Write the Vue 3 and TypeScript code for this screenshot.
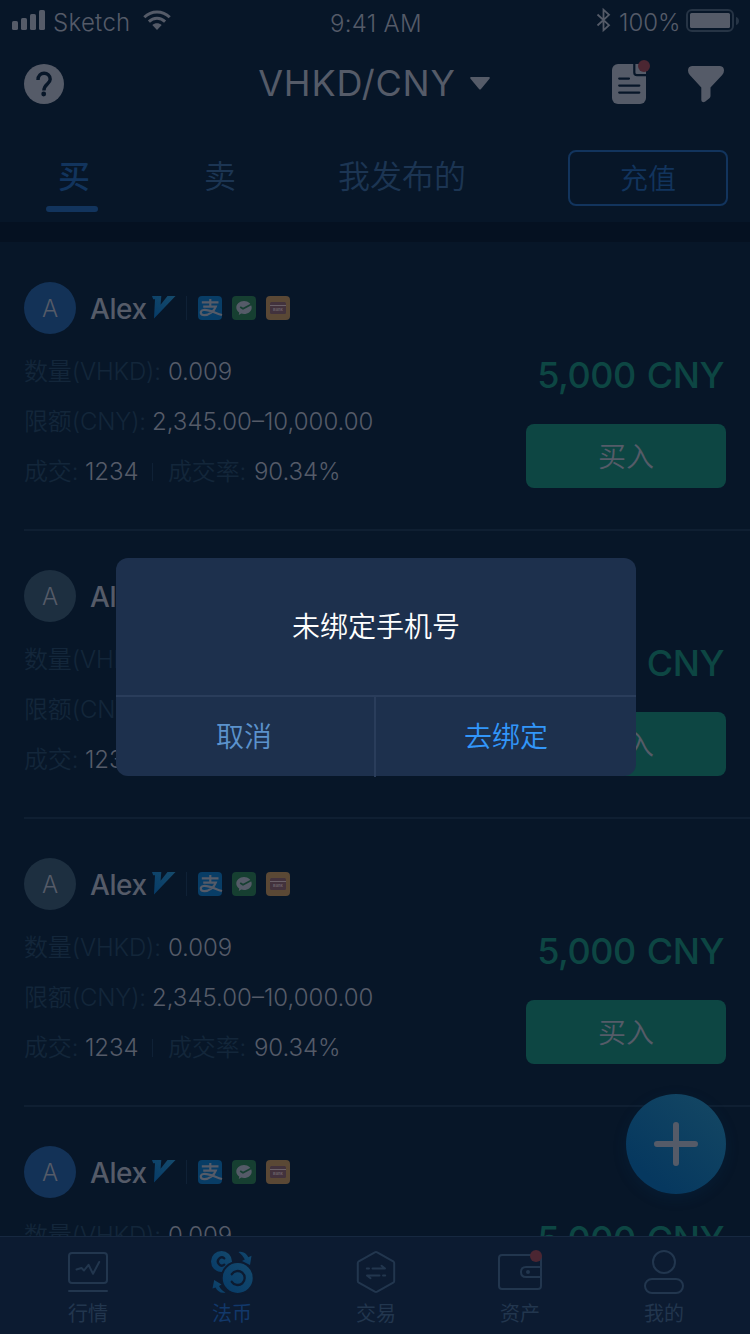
<script setup lang="ts">
import { ref } from 'vue'

interface Offer {
  id: number
  online: boolean
}

const offers: Offer[] = [
  { id: 1, online: true },
  { id: 2, online: false },
  { id: 3, online: false },
  { id: 4, online: true },
]

const tabs = ['买', '卖', '我发布的']
const activeTab = ref(0)
</script>

<template>
  <div class="screen">
    <header class="status">
      <div class="status-left">
        <svg class="signal" width="34" height="20" viewBox="0 0 34 20">
          <rect x="0" y="11" width="6" height="9" rx="1.6" />
          <rect x="9" y="8" width="6" height="12" rx="1.6" />
          <rect x="18" y="4" width="6" height="16" rx="1.6" />
          <rect x="27" y="0" width="6" height="20" rx="1.6" />
        </svg>
        <span class="carrier">Sketch</span>
        <svg class="wifi" width="28" height="20" viewBox="0 0 28 20">
          <path d="M1.3 7.2C8.5 .1 19.500 .1 26.700 7.200" />
          <path d="M5.900 11.600C10.500 7.100 17.500 7.100 22.100 11.600" />
          <path class="solid" d="M9.300 15.100C12 12.700 16 12.700 18.700 15.100L14 19.900Z" />
        </svg>
      </div>
      <span class="time">9:41 AM</span>
      <div class="status-right">
        <svg width="16" height="24" viewBox="0 0 16 24" class="bluetooth">
          <path d="M1.500 6.500L13 17.200L7.500 22.300V1.700L13 6.800L1.500 17.500" />
        </svg>
        <span class="percent">100%</span>
        <svg width="54" height="24" viewBox="0 0 54 24" class="battery">
          <rect class="shell" x="1" y="1" width="46" height="21" rx="5" />
          <rect x="4" y="4" width="40" height="15" rx="1.500" />
          <path class="nub" d="M50 8C54 9 54 15 50 16Z" />
        </svg>
      </div>
    </header>

    <nav class="nav">
      <svg class="help" width="40" height="40" viewBox="0 0 40 40">
        <circle cx="20" cy="20" r="20" />
        <path d="M14 16C13.800 6.800 26.300 7.300 26.200 15.300C26.200 20 19.900 20.300 19.900 26.500" />
        <circle class="point" cx="19.700" cy="30" r="2.400" />
      </svg>
      <h1 class="pair">
        <span class="pair-name">VHKD/CNY</span>
        <svg width="20" height="13" viewBox="0 0 20 13"><path d="M1 0H19Q20.500 .3 19.500 1.800L11 12Q10 13 9 12L.5 1.800Q-.5 .3 1 0Z" /></svg>
      </h1>
      <div class="nav-actions">
        <svg class="orders" width="40" height="46" viewBox="0 0 40 46">
          <rect x="0" y="4" width="34" height="40" rx="6" />
          <path class="cut" d="M22.300 3V12.500Q22.300 15.200 25 15.200H35M7.200 18.600H17M7.200 25.600H27.300M7.200 32.600H27.300" />
          <circle class="alert" cx="32" cy="6" r="6" />
        </svg>
        <svg width="36" height="37" viewBox="0 0 36 37">
          <path d="M4 0H32Q36 .3 36 4.500Q36 7 34.200 9L22.500 21.500V29.800Q22.500 31 21.700 32L17 35.800Q13.300 37 13.300 34V21.500L1.800 9Q0 7 0 4.500Q0 .3 4 0Z" />
        </svg>
      </div>
    </nav>

    <div class="tabs">
      <button
        v-for="(tab, i) in tabs"
        :key="tab"
        class="tab"
        :class="{ active: i === activeTab }"
        @click="activeTab = i"
      ><span>{{ tab }}</span></button>
      <button class="recharge">充值</button>
    </div>

    <main class="offers">
      <article v-for="offer in offers" :key="offer.id" class="offer">
        <div class="seller">
          <span class="avatar" :class="{ online: offer.online }">A</span>
          <span class="name">Alex</span>
          <svg class="vip" width="24" height="23" viewBox="0 0 24 23">
            <defs>
              <linearGradient :id="'vip' + offer.id" x1="0" y1="1" x2="1" y2="0">
                <stop offset="0" stop-color="#063b68" />
                <stop offset="1" stop-color="#154a6b" />
              </linearGradient>
            </defs>
            <path :fill="'url(#vip' + offer.id + ')'" d="M0 0H9.300L8.600 8.800L15.500 0H23.500L2 22.500L3 3.300H1.200Z" />
          </svg>
          <i class="bar"></i>
          <svg class="pay" width="24" height="24" viewBox="0 0 24 24">
            <rect width="24" height="24" rx="4" fill="#083d66" />
            <path class="alipay" d="M3.800 6.400H20.500M12.300 3V10.600M5.200 10.600H17.800C16 15.500 11 19.200 6.500 19.200C1.800 19.200 1.700 14.700 5.500 14C10.500 13.200 16.500 16.700 24 19" />
          </svg>
          <svg class="pay" width="24" height="24" viewBox="0 0 24 24">
            <rect width="24" height="24" rx="4" fill="#163f31" />
            <path fill="#555b68" d="M12 5C16.500 5 19.700 8 19.700 11.500C19.700 15.500 16.200 18 12 18Q10.500 18 9.300 17.600L6.800 19L7.200 16.600C5.300 15.300 4.300 13.500 4.300 11.500C4.300 8 7.500 5 12 5Z" />
            <path d="M8.200 11L11 12.800L19 8.600" fill="none" stroke="#163f31" stroke-width="1.700" />
          </svg>
          <svg class="pay" width="24" height="24" viewBox="0 0 24 24">
            <rect width="24" height="24" rx="4" fill="#5a4835" />
            <rect x="4" y="6" width="16" height="12" rx="1.500" fill="#42323d" />
            <path d="M4 9.500H20" stroke="#6a6068" stroke-width="1" />
            <text x="12" y="15" text-anchor="middle" font-size="4" font-weight="700" fill="#6a6068">Bank</text>
          </svg>
        </div>
        <div class="details">
          <dl class="facts">
            <div class="fact"><dt class="l-amount">数量(VHKD):</dt><dd>0.009</dd></div>
            <div class="fact"><dt class="l-limit">限额(CNY):</dt><dd class="v-limit">2,345.00–10,000.00</dd></div>
            <div class="fact">
              <dt class="l-deals">成交:</dt><dd class="v-deals">1234</dd>
              <i class="bar small"></i>
              <dt class="l-rate">成交率:</dt><dd>90.34%</dd>
            </div>
          </dl>
          <div class="deal">
            <strong class="price">5,000 CNY</strong>
            <button class="buy">买入</button>
          </div>
        </div>
      </article>
    </main>

    <button class="fab">
      <svg width="44" height="44" viewBox="0 0 44 44"><path d="M22 3V41M3 22H41" /></svg>
    </button>

    <footer class="tabbar">
      <a class="item">
        <svg width="44" height="44" viewBox="0 0 44 44">
          <rect x="3" y="3" width="38" height="30" rx="3" />
          <path d="M3 41H41" />
          <path d="M10.500 19.500L15.500 18L18 20.500L22.500 14.800L27 23.800L33.200 12" />
        </svg>
        <span>行情</span>
      </a>
      <a class="item current">
        <svg width="44" height="44" viewBox="0 0 44 44">
          <defs>
            <linearGradient id="coin" x1="0" y1="1" x2="1" y2="0">
              <stop offset="0" stop-color="#073b68" />
              <stop offset="1" stop-color="#14496c" />
            </linearGradient>
          </defs>
          <circle class="coin" cx="11.500" cy="11.500" r="10.500" />
          <path class="groove" d="M14.300 8.300A4 4 0 1 0 14.300 14.700" />
          <circle class="gap" cx="27.700" cy="28" r="17" />
          <circle class="coin" cx="27.700" cy="28" r="15" />
          <path class="groove" d="M21.800 24.200A7 7 0 1 1 21.800 31.800" />
          <path class="coin" d="M28.500 2C33 1 36.500 3.500 38.300 7.300L41.500 5.800L40 15L32 11L34.800 9.600C33.300 6.500 31.500 4.200 28.500 2Z" />
          <path class="coin" d="M15.500 42.500C11 43.500 7.500 41.500 5.500 37.500L2.500 38.500L4.200 30L11.500 34.500L9 36C10.300 39 12.500 41 15.500 42.500Z" />
        </svg>
        <span>法币</span>
      </a>
      <a class="item">
        <svg width="44" height="44" viewBox="0 0 44 44">
          <path d="M20.800 2.400Q22 1.800 23.200 2.400L39.200 11.300Q40.200 12 40.200 13V31Q40.200 32 39.200 32.700L23.200 41.600Q22 42.200 20.800 41.600L4.800 32.700Q3.800 32 3.800 31V13Q3.800 12 4.800 11.300Z" />
          <path d="M12.800 18.500H15M18.500 18.500H31L27.500 15.800M31.200 25.500H29M25.500 25.500H13L16.500 28.200" />
        </svg>
        <span>交易</span>
      </a>
      <a class="item">
        <svg width="44" height="44" viewBox="0 0 44 44">
          <rect x="1" y="5" width="42" height="34" rx="3" />
          <path d="M42.500 17H28Q23 17 23 22Q23 27 28 27H42.500" />
          <circle class="dot" cx="30" cy="22" r="2" />
          <circle class="alert" cx="38" cy="6" r="6" />
        </svg>
        <span>资产</span>
      </a>
      <a class="item">
        <svg width="44" height="44" viewBox="0 0 44 44">
          <circle cx="22" cy="12" r="11" />
          <rect x="3" y="29" width="38" height="14" rx="7" />
        </svg>
        <span>我的</span>
      </a>
    </footer>

    <section class="dialog" role="dialog">
      <p class="message">未绑定手机号</p>
      <div class="choices">
        <button class="cancel">取消</button>
        <button class="confirm">去绑定</button>
      </div>
    </section>
  </div>
</template>

<style>
body {
  margin: 0;
  background: #071628;
}
</style>

<style scoped>
.screen {
  position: relative;
  display: flex;
  flex-direction: column;
  width: 750px;
  height: 1334px;
  overflow: hidden;
  background: #071628;
  color: #555b68;
  font-family: Inter, "Noto Sans CJK SC", sans-serif;
  font-size: 24px;
  font-weight: 350;
}
svg {
  display: block;
  flex: none;
  fill: #555b68;
  overflow: visible;
}
button {
  padding: 0;
  border: 0;
  background: none;
  color: inherit;
  font: inherit;
}
.status {
  display: grid;
  grid-template-columns: 1fr auto 1fr;
  flex: none;
  height: 40px;
  padding: 0 10px 0 12px;
  line-height: 40px;
  font-weight: 300;
}
.status-left,
.status-right {
  display: flex;
}
.status-left { padding-top: 3px; }
.status-right { justify-content: flex-end; padding-top: 3px; }
.signal { margin: 7px 7px 0 0; }
.carrier { width: 90px; letter-spacing: .3px; }
.time { padding-top: 4px; letter-spacing: .3px; }
.wifi { margin-top: 7px; fill: none; stroke: #555b68; stroke-width: 3; }
.wifi .solid { fill: #555b68; stroke: none; }
.bluetooth { margin: 5px 7px 0 0; fill: none; stroke: #555b68; stroke-width: 1.8; }
.percent { width: 67px; }
.battery { margin-top: 6px; }
.battery .shell { fill: none; stroke: #263445; stroke-width: 2; }
.battery .nub { fill: #263445; }

.nav {
  display: grid;
  grid-template-columns: 1fr auto 1fr;
  align-items: center;
  flex: none;
  height: 88px;
  padding: 0 26px 0 24px;
}
.help path { fill: none; stroke: #071628; stroke-width: 3.4; }
.help .point { fill: #071628; }
.pair {
  display: flex;
  align-items: center;
  gap: 14px;
  margin: -2px 0 0;
  font-size: 36px;
  font-weight: 400;
  letter-spacing: .8px;
}
.nav-actions {
  display: flex;
  justify-content: flex-end;
  align-items: center;
  gap: 36px;
}
.orders { margin-top: -2px; }
.cut { fill: none; stroke: #071628; stroke-width: 2.2; stroke-linecap: round; }
.alert { fill: #4b2632; stroke: none; }

.tabs {
  display: flex;
  align-items: flex-start;
  flex: none;
  height: 94px;
  padding-left: 46px;
  border-bottom: 20px solid #051121;
  font-size: 32px;
  color: #1c3553;
}
.tab {
  display: flex;
  flex-direction: column;
  align-items: center;
  width: 52px;
  height: 84px;
  margin-right: 94px;
  padding-top: 20px;
  line-height: 58px;
  box-sizing: border-box;
  white-space: nowrap;
}
.tab span { padding-left: 4px; }
.tab:nth-child(2) { margin-right: 90px; }
.tab:nth-child(3) { width: 132px; margin-right: 102px; }
.tab.active { color: #12345d; font-weight: 500; }
.tab.active::after {
  content: "";
  width: 52px;
  height: 6px;
  border-radius: 3px;
  background: #12345d;
}
.recharge {
  width: 160px;
  height: 56px;
  margin-top: 22px;
  padding-top: 2px;
  box-sizing: border-box;
  border: 2px solid #12345d;
  border-radius: 8px;
  color: #12345d;
  font-size: 28px;
  line-height: 50px;
}

.offers {
  flex: 1;
  min-height: 0;
  padding-top: 1px;
  overflow: hidden;
}
.offer {
  height: 288px;
  margin-left: 24px;
  padding: 39px 24px 0 0;
  box-sizing: border-box;
  border-bottom: 2px solid #0f1f32;
}
.seller {
  display: flex;
  align-items: center;
  height: 52px;
}
.avatar {
  width: 52px;
  height: 52px;
  border-radius: 50%;
  background: #1d2f40;
  line-height: 53px;
  text-align: center;
}
.avatar.online { background: #133257; }
.name {
  width: 62px;
  margin-left: 14px;
  padding-top: 1px;
  font-size: 28px;
  font-weight: 450;
  letter-spacing: -.4px;
  white-space: nowrap;
}
.vip { margin-top: -2px; }
.bar { width: 1px; height: 24px; margin: 0 11px 0 10px; background: #0f2136; }
.pay { margin-right: 10px; }
.pay text { font-family: Inter, sans-serif; }
.alipay { fill: none; stroke: #555b68; stroke-width: 2.2; }
.details {
  display: flex;
  justify-content: space-between;
}
.facts { margin: 13px 0 0; }
.fact {
  display: flex;
  align-items: center;
  height: 50px;
  line-height: 50px;
  white-space: nowrap;
}
dt { color: #13263a; letter-spacing: -.15px; }
dd { margin: 0; letter-spacing: -.1px; }
.l-amount { width: 144px; }
.l-limit { width: 128px; }
.v-limit { letter-spacing: 0; }
.l-deals { width: 61px; }
.v-deals { width: 58px; }
.l-rate { width: 86px; }
.bar.small { height: 18px; margin: 0 15px 0 9px; }
.deal {
  display: flex;
  flex-direction: column;
  align-items: flex-end;
  width: 202px;
  padding-top: 11px;
}
.price {
  margin-right: 2px;
  color: #0d4643;
  font-size: 36px;
  font-weight: 450;
  letter-spacing: -.5px;
  word-spacing: 2px;
  line-height: 60px;
  white-space: nowrap;
}
.buy {
  width: 200px;
  height: 64px;
  margin-top: 19px;
  border-radius: 8px;
  background: #0d4643;
  font-size: 28px;
  line-height: 66px;
}

.fab {
  position: absolute;
  left: 626px;
  top: 1094px;
  display: grid;
  place-items: center;
  width: 100px;
  height: 100px;
  border-radius: 50%;
  background: linear-gradient(40deg, #06385f 20%, #134663 90%);
  box-shadow: 0 4px 14px rgba(6, 56, 95, .2);
}
.fab path { stroke: #555b68; stroke-width: 6; stroke-linecap: round; }

.tabbar {
  display: flex;
  flex: none;
  height: 98px;
  padding: 0 14px 0 16px;
  box-sizing: border-box;
  border-top: 1px solid #162840;
  background: #0c1b31;
  color: #22364e;
  font-size: 20px;
  font-weight: 400;
}
.item {
  display: flex;
  flex-direction: column;
  align-items: center;
  flex: 1;
  padding-top: 13px;
  line-height: 40px;
}
.item svg { fill: none; stroke: #22364e; stroke-width: 2; stroke-linecap: round; stroke-linejoin: round; }
.item .dot { fill: #22364e; stroke: none; }
.item .alert { fill: #4b2632; stroke: none; }
.item.current { color: #12386a; }
.item .coin { fill: url(#coin); stroke: none; }
.item .gap { fill: #0c1b31; stroke: none; }
.item .groove { stroke: #0c1b31; stroke-width: 2.3; }

.dialog {
  position: absolute;
  left: 116px;
  top: 558px;
  display: flex;
  flex-direction: column;
  width: 520px;
  height: 218px;
  border-radius: 12px;
  background: #1d304d;
  font-size: 28px;
}
.message {
  height: 137px;
  margin: 0;
  border-bottom: 2px solid #2a3d5b;
  color: #fff;
  line-height: 139px;
  text-align: center;
}
.choices { display: flex; height: 80px; line-height: 80px; }
.cancel {
  width: 260px;
  padding-right: 2px;
  box-sizing: border-box;
  border-right: 2px solid #2a3d5b;
  color: #5b92cc;
}
.confirm { width: 260px; color: #3296fa; }
</style>
